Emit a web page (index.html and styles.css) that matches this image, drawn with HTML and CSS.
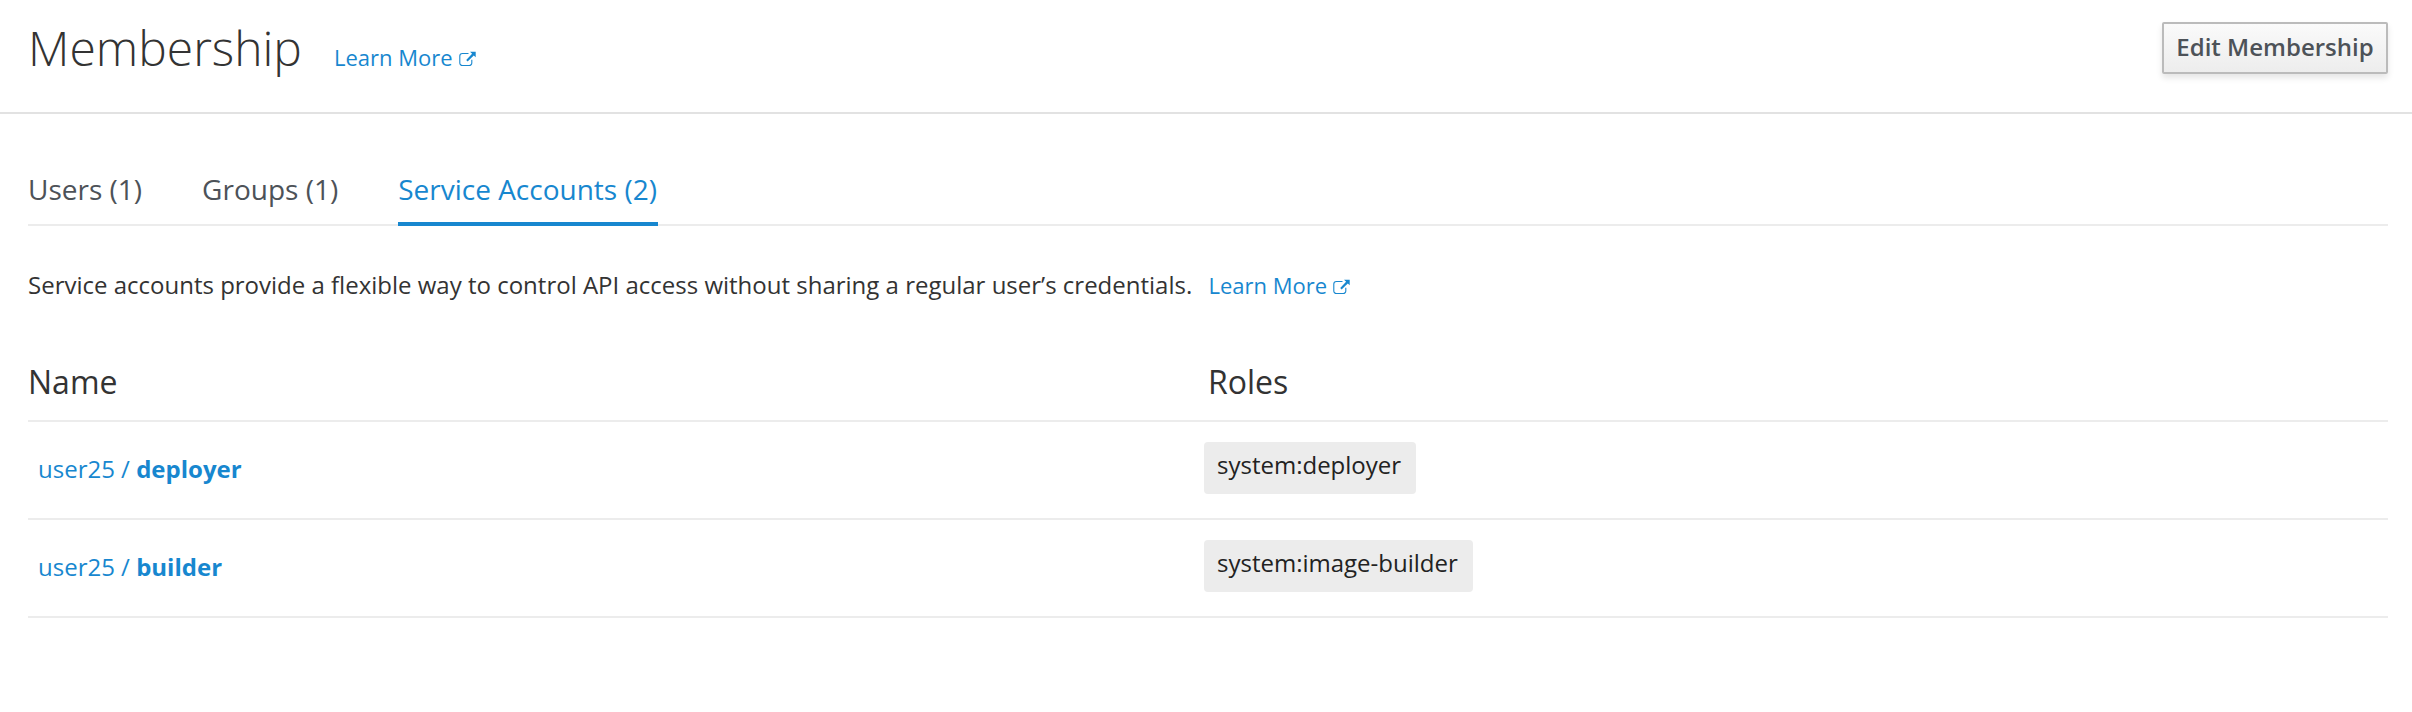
FILE: index.html
```html
<!DOCTYPE html>
<html lang="en">
<head>
<meta charset="utf-8">
<title>Membership</title>
<link rel="stylesheet" href="styles.css">
</head>
<body>
<svg class="sprite" aria-hidden="true">
  <symbol id="external" viewBox="0 0 17 16">
    <path d="M9.500 2.500H3.400A2.600 2.600 0 0 0 .8 5.100v6.800A2.600 2.600 0 0 0 3.400 14.500h6.800a2.600 2.600 0 0 0 2.600-2.600V8.800" fill="none" stroke="currentColor" stroke-width="1.100"/>
    <path d="M11 .7H16.700V6.200L14.800 4.400L8.600 10.400L7.200 9L13.100 2.700Z" fill="currentColor"/>
  </symbol>
</svg>
<header class="header">
  <h1 class="title">Membership</h1>
  <a class="learn">Learn More<svg class="ext"><use href="#external"/></svg></a>
  <button class="edit">Edit Membership</button>
</header>
<main class="content">
  <nav class="tabs">
    <a class="tab">Users (1)</a>
    <a class="tab">Groups (1)</a>
    <a class="tab active">Service Accounts (2)</a>
  </nav>
  <p class="desc">Service accounts provide a flexible way to control API access without sharing a regular user’s credentials. <a class="learn">Learn More<svg class="ext"><use href="#external"/></svg></a></p>
  <section class="table">
    <div class="row head"><h2>Name</h2><h2>Roles</h2></div>
    <div class="row">
      <a class="name">user25 / <b>deployer</b></a>
      <div class="roles"><span class="badge">system:deployer</span></div>
    </div>
    <div class="row">
      <a class="name">user25 / <b>builder</b></a>
      <div class="roles"><span class="badge">system:image-builder</span></div>
    </div>
  </section>
</main>
</body>
</html>
```
FILE: styles.css
```css
* { box-sizing: border-box; }
body {
  margin: 0;
  background: #fff;
  color: #333;
  font: 24px/34px "Open Sans", sans-serif;
}
.sprite { display: none; }
.header {
  display: flex;
  align-items: baseline;
  height: 114px;
  padding: 17px 24px 0 28px;
  border-bottom: 2px solid #e2e2e2;
}
.title { margin: 0; font-size: 48px; font-weight: 300; line-height: 62px; }
.learn { color: #1787cf; font-size: 22px; white-space: nowrap; }
.header .learn { margin-left: 32px; }
.ext { width: 17px; height: 16px; margin-left: 6px; vertical-align: -1px; }
.edit {
  align-self: flex-start;
  width: 226px;
  height: 52px;
  margin: 5px 0 0 auto;
  padding: 0 0 2px;
  border: 2px solid #bbb;
  border-radius: 2px;
  background: linear-gradient(#fafafa, #ededed);
  box-shadow: 0 4px 6px rgba(3, 3, 3, .1);
  color: #4d5258;
  font: 600 24px/34px "Open Sans", sans-serif;
  white-space: nowrap;
}
.content { padding: 55px 24px 0 28px; }
.tabs { display: flex; gap: 60px; height: 57px; border-bottom: 2px solid #ececec; }
.tab {
  height: 57px;
  color: #4d5258;
  font-size: 28px;
  line-height: 40px;
}
.tab.active { padding-right: 1px; border-bottom: 4px solid #1787cf; color: #1787cf; }
.desc { margin: 42px 0 58px; }
.desc .learn { margin-left: 10px; }
.row {
  display: grid;
  grid-template-columns: 1180px 1fr;
  height: 98px;
  border-bottom: 2px solid #ececec;
}
.head { height: 62px; }
h2 { margin: 0; font-size: 32px; font-weight: 400; line-height: 44px; }
.name { padding: 30px 0 0 10px; color: #1787cf; }
.roles { display: flex; align-items: flex-start; padding-top: 20px; margin-left: -4px; }
.badge {
  height: 52px;
  padding: 6px 15px 6px 13px;
  border-radius: 4px;
  background: #ececec;
  color: #222;
}
```
